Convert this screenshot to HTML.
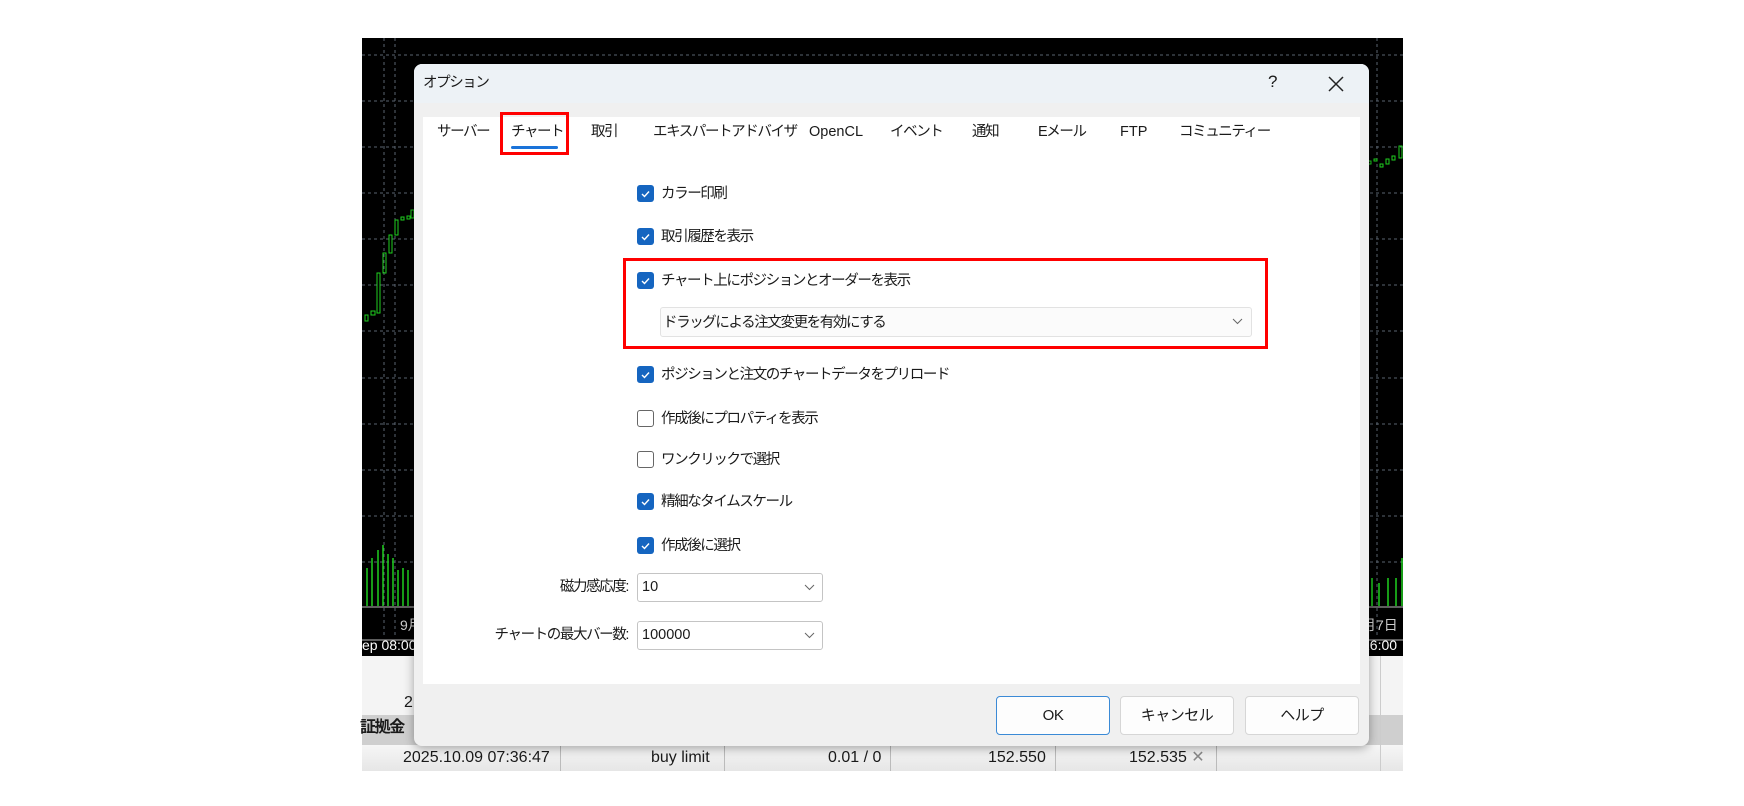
<!DOCTYPE html>
<html><head><meta charset="utf-8"><style>
*{margin:0;padding:0;box-sizing:border-box}
body{width:1744px;height:806px;background:#fff;position:relative;overflow:hidden;font-family:"Liberation Sans","Noto Sans CJK JP",sans-serif;color:#1a1a1a}
.abs{position:absolute}
.t{position:absolute;font-size:14.5px;letter-spacing:-1.4px;white-space:nowrap;line-height:18px}
.l{letter-spacing:0}
.cb{position:absolute;width:17px;height:17px;border-radius:3px;background:#1565c0}
.cb svg{position:absolute;left:2px;top:2px}
.cbu{position:absolute;width:17px;height:17px;border-radius:3px;border:1px solid #666;background:#fff}
.combo{position:absolute;background:#fff;border:1px solid #c4c4c4;border-radius:3px}
.btn{position:absolute;background:#fdfdfd;border:1px solid #d6d6d6;border-radius:4px;font-size:15px;text-align:center;line-height:37px;letter-spacing:-0.5px}
</style></head><body>
<div class="abs" style="left:362px;top:38px;width:1041px;height:618px;background:#000"></div>
<svg class="abs" style="left:362px;top:38px" width="1041" height="618">
<g stroke="#5a6470" stroke-dasharray="3,3" stroke-width="1">
<line x1="0" y1="17" x2="1041" y2="17"/><line x1="0" y1="63" x2="1041" y2="63"/><line x1="0" y1="109" x2="1041" y2="109"/><line x1="0" y1="155" x2="1041" y2="155"/><line x1="0" y1="201" x2="1041" y2="201"/><line x1="0" y1="247" x2="1041" y2="247"/><line x1="0" y1="293" x2="1041" y2="293"/><line x1="0" y1="340" x2="1041" y2="340"/><line x1="0" y1="386" x2="1041" y2="386"/><line x1="0" y1="432" x2="1041" y2="432"/><line x1="0" y1="478" x2="1041" y2="478"/><line x1="0" y1="524" x2="1041" y2="524"/>
<line x1="22" y1="0" x2="22" y2="600"/><line x1="33" y1="0" x2="33" y2="600"/><line x1="1015" y1="0" x2="1015" y2="600"/>
</g>
<g stroke="#1fd11f" fill="none" stroke-width="1">
<rect x="3" y="277" width="3" height="6"/><rect x="9" y="273" width="4" height="4"/><rect x="15" y="235" width="3" height="40"/><rect x="21" y="215" width="3" height="20"/><rect x="27" y="197" width="3" height="18"/><rect x="33" y="182" width="3" height="15"/><rect x="39" y="179" width="3" height="3"/><rect x="45" y="178" width="3" height="3"/><rect x="49" y="172" width="3" height="8"/>
<rect x="1006" y="123" width="3" height="3"/><rect x="1012" y="121" width="3" height="2"/><rect x="1018" y="126" width="3" height="3"/><rect x="1024" y="121" width="3" height="5"/><rect x="1030" y="118" width="3" height="4"/><rect x="1037" y="108" width="3" height="12"/>
</g>
<g stroke="#1fd11f" stroke-width="1.5">
<line x1="5" y1="530" x2="5" y2="568"/><line x1="10" y1="520" x2="10" y2="568"/><line x1="16" y1="512" x2="16" y2="568"/><line x1="21" y1="507" x2="21" y2="568"/><line x1="26" y1="516" x2="26" y2="568"/><line x1="31" y1="520" x2="31" y2="568"/><line x1="36" y1="532" x2="36" y2="568"/><line x1="41" y1="530" x2="41" y2="568"/><line x1="46" y1="532" x2="46" y2="568"/>
<line x1="1010" y1="540" x2="1010" y2="568"/><line x1="1017" y1="545" x2="1017" y2="568"/><line x1="1026" y1="540" x2="1026" y2="568"/><line x1="1034" y1="540" x2="1034" y2="568"/><line x1="1040" y1="520" x2="1040" y2="568"/>
</g>
<line x1="0" y1="569" x2="1041" y2="569" stroke="#bbb"/><line x1="0" y1="602" x2="1041" y2="602" stroke="#bbb"/>
<text x="38" y="592" fill="#ccc" font-size="14" font-family="Liberation Sans,Noto Sans CJK JP,sans-serif">9月</text>
<text x="0" y="612" fill="#fff" font-size="14" font-family="Liberation Sans,sans-serif">ep 08:00</text>
<text x="1000" y="592" fill="#ccc" font-size="14" font-family="Liberation Sans,Noto Sans CJK JP,sans-serif">月7日</text>
<text x="1000" y="612" fill="#fff" font-size="14" font-family="Liberation Sans,sans-serif">16:00</text>
</svg>
<div class="abs" style="left:362px;top:656px;width:1041px;height:59px;background:#f4f4f4"></div>
<div class="t l" style="left:404px;top:694px;font-size:16px">2</div>
<div class="abs" style="left:362px;top:715px;width:1041px;height:30px;background:#cfcfcf"></div>
<div class="t" style="left:360px;top:719px;font-size:16px;font-weight:bold">証拠金</div>
<div class="abs" style="left:362px;top:745px;width:1041px;height:26px;background:linear-gradient(#f6f6f6,#e6e6e6)"></div>
<div class="abs" style="left:560px;top:745px;width:1px;height:26px;background:#bbb"></div>
<div class="abs" style="left:724px;top:745px;width:1px;height:26px;background:#bbb"></div>
<div class="abs" style="left:890px;top:745px;width:1px;height:26px;background:#bbb"></div>
<div class="abs" style="left:1055px;top:745px;width:1px;height:26px;background:#bbb"></div>
<div class="abs" style="left:1216px;top:745px;width:1px;height:26px;background:#bbb"></div>
<div class="abs" style="left:1380px;top:656px;width:1px;height:115px;background:#ccc"></div>
<div class="t l" style="left:403px;top:749px;font-size:16px">2025.10.09 07:36:47</div>
<div class="t l" style="left:651px;top:749px;font-size:16px">buy limit</div>
<div class="t l" style="left:828px;top:749px;font-size:16px">0.01 / 0</div>
<div class="t l" style="left:988px;top:749px;font-size:16px">152.550</div>
<div class="t l" style="left:1129px;top:749px;font-size:16px">152.535 <span style="color:#888">✕</span></div>

<div class="abs" style="left:414px;top:64px;width:955px;height:682px;background:#f0f0f0;border-radius:8px;box-shadow:0 2px 10px rgba(0,0,0,.35);overflow:hidden">
<div class="abs" style="left:0;top:0;width:955px;height:39px;background:#edf2f6"></div>
</div>
<div class="t" style="left:423px;top:74px">オプション</div>
<div class="t l" style="left:1268px;top:73px;font-size:17px">?</div>
<svg class="abs" style="left:1328px;top:76px" width="16" height="16"><path d="M1 1L15 15M15 1L1 15" stroke="#222" stroke-width="1.5"/></svg>
<div class="abs" style="left:423px;top:117px;width:937px;height:567px;background:#fff"></div>

<div class="t" style="left:437px;top:123px">サーバー</div>
<div class="t" style="left:511px;top:123px">チャート</div>
<div class="abs" style="left:511px;top:146px;width:47px;height:3px;background:#1a73d9;border-radius:2px"></div>
<div class="abs" style="left:500px;top:112px;width:69px;height:43px;border:3px solid #f00"></div>
<div class="t" style="left:591px;top:123px">取引</div>
<div class="t" style="left:653px;top:123px">エキスパートアドバイザ</div>
<div class="t l" style="left:809px;top:123px">OpenCL</div>
<div class="t" style="left:890px;top:123px">イベント</div>
<div class="t" style="left:972px;top:123px">通知</div>
<div class="t" style="left:1038px;top:123px">Eメール</div>
<div class="t l" style="left:1120px;top:123px">FTP</div>
<div class="t" style="left:1179px;top:123px">コミュニティー</div>

<div class="cb" style="left:637px;top:185px"><svg width="13" height="13"><path d="M3 7l2.5 2.5L10 4.5" stroke="#fff" stroke-width="1.4" fill="none"/></svg></div>
<div class="t" style="left:661px;top:185px">カラー印刷</div>
<div class="cb" style="left:637px;top:228px"><svg width="13" height="13"><path d="M3 7l2.5 2.5L10 4.5" stroke="#fff" stroke-width="1.4" fill="none"/></svg></div>
<div class="t" style="left:661px;top:228px">取引履歴を表示</div>
<div class="abs" style="left:623px;top:258px;width:645px;height:91px;border:3px solid #f00"></div>
<div class="cb" style="left:637px;top:272px"><svg width="13" height="13"><path d="M3 7l2.5 2.5L10 4.5" stroke="#fff" stroke-width="1.4" fill="none"/></svg></div>
<div class="t" style="left:661px;top:272px">チャート上にポジションとオーダーを表示</div>
<div class="combo" style="left:660px;top:307px;width:592px;height:30px;background:#fbfbfb;border-color:#e2e2e2"></div>
<div class="t" style="left:663px;top:314px">ドラッグによる注文変更を有効にする</div>
<svg class="abs" style="left:1232px;top:318px" width="11" height="7"><path d="M1 1l4.5 4.5L10 1" stroke="#666" fill="none"/></svg>
<div class="cb" style="left:637px;top:366px"><svg width="13" height="13"><path d="M3 7l2.5 2.5L10 4.5" stroke="#fff" stroke-width="1.4" fill="none"/></svg></div>
<div class="t" style="left:661px;top:366px">ポジションと注文のチャートデータをプリロード</div>
<div class="cbu" style="left:637px;top:410px"></div>
<div class="t" style="left:661px;top:410px">作成後にプロパティを表示</div>
<div class="cbu" style="left:637px;top:451px"></div>
<div class="t" style="left:661px;top:451px">ワンクリックで選択</div>
<div class="cb" style="left:637px;top:493px"><svg width="13" height="13"><path d="M3 7l2.5 2.5L10 4.5" stroke="#fff" stroke-width="1.4" fill="none"/></svg></div>
<div class="t" style="left:661px;top:493px">精細なタイムスケール</div>
<div class="cb" style="left:637px;top:537px"><svg width="13" height="13"><path d="M3 7l2.5 2.5L10 4.5" stroke="#fff" stroke-width="1.4" fill="none"/></svg></div>
<div class="t" style="left:661px;top:537px">作成後に選択</div>

<div class="t" style="left:430px;width:198px;text-align:right;top:578px">磁力感応度:</div>
<div class="combo" style="left:637px;top:573px;width:186px;height:29px"></div>
<div class="t l" style="left:642px;top:578px">10</div>
<svg class="abs" style="left:804px;top:584px" width="11" height="7"><path d="M1 1l4.5 4.5L10 1" stroke="#666" fill="none"/></svg>
<div class="t" style="left:430px;width:198px;text-align:right;top:626px">チャートの最大バー数:</div>
<div class="combo" style="left:637px;top:621px;width:186px;height:29px"></div>
<div class="t l" style="left:642px;top:626px">100000</div>
<svg class="abs" style="left:804px;top:632px" width="11" height="7"><path d="M1 1l4.5 4.5L10 1" stroke="#666" fill="none"/></svg>

<div class="btn" style="left:996px;top:696px;width:114px;height:39px;border-color:#3b8ad6">OK</div>
<div class="btn" style="left:1120px;top:696px;width:114px;height:39px">キャンセル</div>
<div class="btn" style="left:1245px;top:696px;width:114px;height:39px">ヘルプ</div>
</body></html>
